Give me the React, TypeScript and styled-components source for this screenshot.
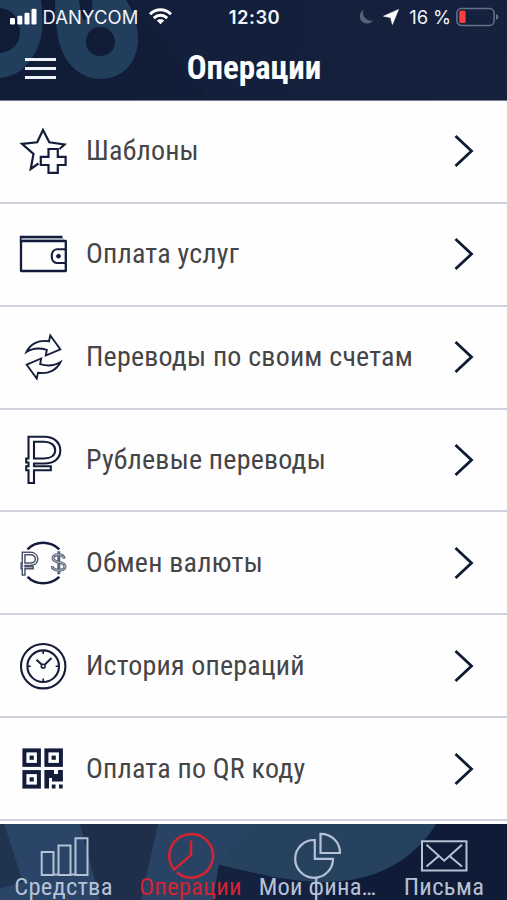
import React from "react";
import styled, { createGlobalStyle } from "styled-components";

const NAVY = "#131d3b";

const GlobalStyle = createGlobalStyle`
  * { box-sizing: border-box; }
  body { margin: 0; background: #fff; }
`;

const Screen = styled.div`
  width: 507px;
  height: 900px;
  display: flex;
  flex-direction: column;
  overflow: hidden;
  background: #fefefe;
  font-family: "Roboto Condensed", Roboto, sans-serif;
`;

const Header = styled.header`
  position: relative;
  height: 101px;
  flex: none;
  background: linear-gradient(100deg, #101b36 0%, #121d39 45%, #14203d 100%);
  border-bottom: 1px solid #767d8e;
  color: #fff;
`;

const Backdrop = styled.svg`
  position: absolute;
  inset: 0;
  display: block;
`;

const StatusBar = styled.div`
  position: relative;
  height: 34px;
  display: grid;
  grid-template-columns: 1fr auto 1fr;
  align-items: center;
  padding: 0 8px 0 10px;
  font-family: Inter, sans-serif;
  line-height: 34px;
  color: #f1f4fa;
`;

const StatusGroup = styled.div<{ $end?: boolean }>`
  display: flex;
  align-items: center;
  justify-content: ${(p) => (p.$end ? "flex-end" : "flex-start")};
  white-space: nowrap;
`;

const Carrier = styled.span`
  margin: 0 10.5px 0 5.5px;
  font-size: 18.4px;
  letter-spacing: 0.1px;
`;

const Clock = styled.span`
  font-weight: 600;
  font-size: 18.4px;
  letter-spacing: 0.5px;
`;

const Charge = styled.span`
  margin: 0 5px 0 10px;
  font-size: 18.4px;
  letter-spacing: -0.1px;
`;

const MoonSlot = styled.span`
  display: flex;
  margin-right: 9px;
`;

const TitleBar = styled.div`
  position: relative;
  height: 66px;
  display: grid;
  grid-template-columns: 83px 1fr 82px;
  align-items: center;
`;

const MenuButton = styled.button`
  display: flex;
  flex-direction: column;
  gap: 6px;
  width: 31px;
  margin: 1px 0 0 25px;
  padding: 0;
  border: 0;
  background: none;
`;

const MenuLine = styled.span`
  height: 3px;
  background: #eeeff7;
`;

const Title = styled.h1`
  margin: 0;
  padding-top: 1px;
  text-align: center;
  font-size: 33px;
  font-weight: 700;
  line-height: 66px;
  letter-spacing: -0.05px;
`;

const List = styled.ul`
  flex: none;
  height: 723px;
  margin: 0;
  padding: 0;
  list-style: none;
  overflow: hidden;
`;

const Row = styled.li`
  height: 102.86px;
  display: grid;
  grid-template-columns: 52px 1fr 20px;
  column-gap: 17px;
  align-items: center;
  padding: 0 33px 0 17px;
  border-bottom: 2px solid #cfd1dd;
`;

const RowLabel = styled.span`
  font-size: 28px;
  font-weight: 400;
  line-height: 36px;
  letter-spacing: 0.2px;
  color: #454547;
  white-space: nowrap;
`;

const RowIcon = styled.svg`
  display: block;
  width: 52px;
  height: 56px;
  fill: none;
  stroke: ${NAVY};
  stroke-width: 2;
`;

const Chevron = styled.svg`
  display: block;
  width: 20px;
  height: 34px;
  fill: none;
  stroke: #0d1a33;
  stroke-width: 2.8;
`;

const TabBar = styled.nav`
  position: relative;
  height: 76px;
  flex: none;
  display: grid;
  grid-template-columns: 127px 127px 127px 126px;
  background: #101b38;
  overflow: hidden;
`;

const Tab = styled.a<{ $active?: boolean }>`
  position: relative;
  display: flex;
  flex-direction: column;
  align-items: center;
  padding-top: 7px;
  color: ${(p) => (p.$active ? "#d42434" : "#b6c2d6")};
`;

const TabIcon = styled.svg`
  display: block;
  flex: none;
  width: 54px;
  height: 48px;
  fill: none;
  stroke: currentColor;
  stroke-width: 2;
`;

const TabLabel = styled.span<{ $spacing?: number }>`
  margin-top: -6px;
  font-size: 24.6px;
  line-height: 28px;
  letter-spacing: ${(p) => p.$spacing ?? 0.2}px;
  white-space: nowrap;
`;

const RubleOutline = ({ width = 2.1 }: { width?: number }) => (
  <g strokeWidth={width}>
    <path d="M28.5 436.8H44.5C54 436.8 60.3 442.5 60.3 450.5S54 463.5 44.5 463.5H34V466.3H50.8V470.3H34V483H28.5V470.3H26.2V466.3H28.5V462.5H26.2V458.5H28.5Z" />
    <path d="M34 441.8H44C51 441.8 55.2 445.3 55.2 450.3S51 458.5 44 458.5H34Z" />
  </g>
);

const qrFinder = (x: number, y: number) => (
  <g key={`${x}-${y}`}>
    <rect x={x + 2} y={y + 2} width="14.5" height="14.5" strokeWidth="4" />
    <rect x={x + 7.2} y={y + 7.2} width="4.2" height="4.2" fill={NAVY} stroke="none" />
  </g>
);

const items: { label: string; top: number; icon: React.ReactNode }[] = [
  {
    label: "Шаблоны",
    top: 123.5,
    icon: (
      <>
        <path d="M38.5 164L30.7 169.5L33.5 154.5L22 144.3L37.2 142.8L43 130.5L49.3 142.8L64.5 145L59.5 149.5" strokeWidth="2.2" />
        <path d="M48.5 149.5H57.8V157.3H65.6V165.5H57.8V173.3H48.5V165.5H40.8V157.3H48.5Z" strokeWidth="2.2" />
      </>
    ),
  },
  {
    label: "Оплата услуг",
    top: 226.3,
    icon: (
      <>
        <path d="M21 241.3V271.3H65.8V241.3Z" strokeWidth="2.3" strokeLinejoin="round" />
        <path d="M21 241.5V237.3H62.5" strokeWidth="2.4" />
        <path d="M21 239.4H64" strokeWidth="1.4" stroke="#879bab" />
        <path d="M65.8 249.5H57C50 249.5 50 263.3 57 263.3H65.8" strokeWidth="2.1" />
        <circle cx="58.5" cy="256.5" r="1.9" fill={NAVY} strokeWidth="1" />
      </>
    ),
  },
  {
    label: "Переводы по своим счетам",
    top: 329,
    icon: (
      <g strokeWidth="1.9">
        <path d="M26.5 352C30 344.5 38 339.5 49 341.2L50.3 335.5L60.3 349.3L45.8 355.5L46.8 349.8C39 347.5 32 348.5 26.5 352Z" />
        <path d="M60.5 362C57 369.5 49 374.5 38 372.8L36.7 378.5L26.7 364.7L41.2 358.5L40.2 364.2C48 366.5 55 365.5 60.5 362Z" />
      </g>
    ),
  },
  { label: "Рублевые переводы", top: 432, icon: <RubleOutline /> },
  {
    label: "Обмен валюты",
    top: 534.7,
    icon: (
      <>
        <path d="M27.5 549C36 540.4 50 540.4 59.3 549M27.5 576.5C36 585 50 585 59.3 576.5" strokeWidth="2.5" />
        <g transform="translate(8.3 338) scale(.49)" stroke="#4b546c">
          <RubleOutline width={3} />
        </g>
        <path d="M64.3 558.3C63.3 553.2 53 553.2 53 558C53 563.3 65 560.5 65 566.3C65 571.3 53 571.3 52 565.8M58.8 551V574" strokeWidth="3" stroke="#5a647a" />
        <path d="M64 558C62.5 553.2 53 553.2 53 558C53 563 65 560.8 65 566.3C65 571.3 53 571.3 52.2 566" strokeWidth="0.8" stroke="#d4d8df" />
      </>
    ),
  },
  {
    label: "История операций",
    top: 637.5,
    icon: (
      <>
        <circle cx="43.2" cy="665.7" r="22.2" strokeWidth="2.1" />
        <circle cx="43.2" cy="665.7" r="15.8" strokeWidth="2.1" />
        <path d="M43.2 650V653.5M43.2 678V681.5M27.5 665.7H30.7M55.7 665.7H59" strokeWidth="1.6" />
        <path d="M36.5 659.2L42.2 664.4M51.5 657.5L44.5 664.4" strokeWidth="2" />
        <circle cx="43.2" cy="665.7" r="1.9" strokeWidth="1.5" />
      </>
    ),
  },
  {
    label: "Оплата по QR коду",
    top: 740.4,
    icon: (
      <>
        {qrFinder(22.4, 747.8)}
        {qrFinder(44.4, 747.8)}
        {qrFinder(22.4, 769.5)}
        <path d="M44.4 769.5H54V773.5H58V769.5H62.9V781H52V777.5H49V788H44.4Z" fill={NAVY} stroke="none" />
        <path d="M51.8 784H55.5V787.8H51.8ZM59 784H62.7V787.8H59Z" fill={NAVY} stroke="none" />
      </>
    ),
  },
];

const tabs: { label: string; x: number; active?: boolean; spacing?: number; icon: React.ReactNode }[] = [
  {
    label: "Средства",
    x: 36.5,
    icon: <path d="M41.2 875V852H53V875ZM58 875V845.5H70V875ZM75 875V838.3H87V875ZM53 874.5H58M70 874.5H75" />,
  },
  {
    label: "Операции",
    x: 164,
    active: true,
    icon: <path d="M177 872.3A21.8 21.8 0 1 0 174.2 869.4L191 855V840.5" strokeWidth="2.5" />,
  },
  {
    label: "Мои фина…",
    x: 291,
    icon: (
      <>
        <path d="M314.8 840A18.9 18.9 0 1 0 333 858.8H314.8Z" strokeWidth="2.2" />
        <path d="M320.5 833.8V853H340C340 842 331.5 833.8 320.5 833.8Z" strokeWidth="2.2" />
      </>
    ),
  },
  {
    label: "Письма",
    x: 417,
    spacing: 0.35,
    icon: (
      <>
        <rect x="422" y="841.3" width="44.5" height="29.2" />
        <path d="M426.5 844.8L444.2 860.7L462 844.8M426.5 866.5L438.8 856M462 866.5L449.5 856" />
      </>
    ),
  },
];

const StatusIcons = {
  signal: (
    <svg width="27" height="18" viewBox="0 0 27 18" fill="#fff">
      <rect x="0" y="10" width="5" height="6.5" rx="1.3" />
      <rect x="7.3" y="7.8" width="5" height="8.7" rx="1.3" />
      <rect x="14.5" y="4.8" width="5" height="11.7" rx="1.3" />
      <rect x="21.5" y="0.8" width="5" height="15.7" rx="1.3" />
    </svg>
  ),
  wifi: (
    <svg width="23" height="18" viewBox="0 0 23 18" fill="none" stroke="#fff" strokeWidth="2.9">
      <path d="M1 6.3C7 .2 16 .2 22 6.3M4.8 10.1C8.8 6.3 14.2 6.3 18.2 10.1" />
      <path d="M11.5 16.3L7.8 12.6C9.8 10.7 13.2 10.7 15.2 12.6Z" fill="#fff" stroke="none" />
    </svg>
  ),
  moon: (
    <svg width="15" height="16" viewBox="0 0 15 16" fill="#56617a">
      <path d="M4.6 .8A7.3 7.3 0 1 0 14.2 11.2A7.8 7.8 0 0 1 4.6 .8Z" />
    </svg>
  ),
  arrow: (
    <svg width="16" height="16" viewBox="0 0 16 16" fill="#fff">
      <path d="M15.5 .5L9.4 15.5L7.6 8.6L.5 7.2Z" stroke="#fff" strokeWidth=".6" strokeLinejoin="round" />
    </svg>
  ),
  battery: (
    <svg width="43" height="20" viewBox="0 0 43 20">
      <rect x=".9" y="1.4" width="37.2" height="17" rx="4.5" fill="none" stroke="#687289" strokeWidth="1.5" />
      <rect x="3.3" y="3.8" width="6.3" height="12.2" rx="1.3" fill="#f93f37" />
      <path d="M40 6.9Q42.5 7.9 42.5 9.9T40 12.9Z" fill="#687289" />
    </svg>
  ),
};

export default function App() {
  return (
    <Screen>
      <GlobalStyle />
      <Header>
        <Backdrop width="507" height="100" viewBox="0 0 507 100">
          <path d="M130 0H507V100H210Z" fill="#17233f" opacity=".4" />
          <g fill="#223e5d">
            <path d="M0 0H41C43 17 44 34 37 49C29 67 15 77 0 78V53C12 52 20 44 20 32C20 18 12 9 0 8Z" />
            <path
              fillRule="evenodd"
              d="M55 0H79C80 8 81 16 84 21C89 14 94 12 92 0H126C134 12 138 25 138 41C137 64 121 79 101 79C80 79 65 64 59 42C56 29 55 15 55 0ZM100 27C91 27 86 34 86 42C86 50 92 56 100 56C109 56 115 50 115 42C115 34 109 27 100 27Z"
            />
          </g>
        </Backdrop>
        <StatusBar>
          <StatusGroup>
            {StatusIcons.signal}
            <Carrier>DANYCOM</Carrier>
            {StatusIcons.wifi}
          </StatusGroup>
          <Clock>12:30</Clock>
          <StatusGroup $end>
            <MoonSlot>{StatusIcons.moon}</MoonSlot>
            {StatusIcons.arrow}
            <Charge>16 %</Charge>
            {StatusIcons.battery}
          </StatusGroup>
        </StatusBar>
        <TitleBar>
          <MenuButton aria-label="Меню">
            <MenuLine />
            <MenuLine />
            <MenuLine />
          </MenuButton>
          <Title>Операции</Title>
        </TitleBar>
      </Header>
      <List>
        {items.map((item) => (
          <Row key={item.label}>
            <RowIcon viewBox={`17 ${item.top} 52 56`}>{item.icon}</RowIcon>
            <RowLabel>{item.label}</RowLabel>
            <Chevron viewBox="0 0 20 34">
              <path d="M1.5 2L17.5 17L1.5 32" />
            </Chevron>
          </Row>
        ))}
      </List>
      <TabBar>
        <Backdrop width="507" height="76" viewBox="0 824 507 76">
          <path d="M0 824H240V900H0Z" fill="#1e2e4b" />
          <path d="M4 824H80L100 900H0V888L22 882Z" fill="#2a4568" />
          <path d="M0 824H4L23 882L0 888Z" fill="#20334f" />
          <path d="M158 824H436C413 862 373 882 325 882C282 882 249 871 219 865L213 900H141Z" fill="#27425f" />
          <path d="M158 824H250L219 865L213 900H141Z" fill="#2a4669" opacity=".4" />
          <path d="M219 865C249 871 282 882 325 882V900H213Z" fill="#14213f" />
        </Backdrop>
        {tabs.map((tab) => (
          <Tab key={tab.label} $active={tab.active}>
            <TabIcon viewBox={`${tab.x} 831 54 48`}>{tab.icon}</TabIcon>
            <TabLabel $spacing={tab.spacing}>{tab.label}</TabLabel>
          </Tab>
        ))}
      </TabBar>
    </Screen>
  );
}
